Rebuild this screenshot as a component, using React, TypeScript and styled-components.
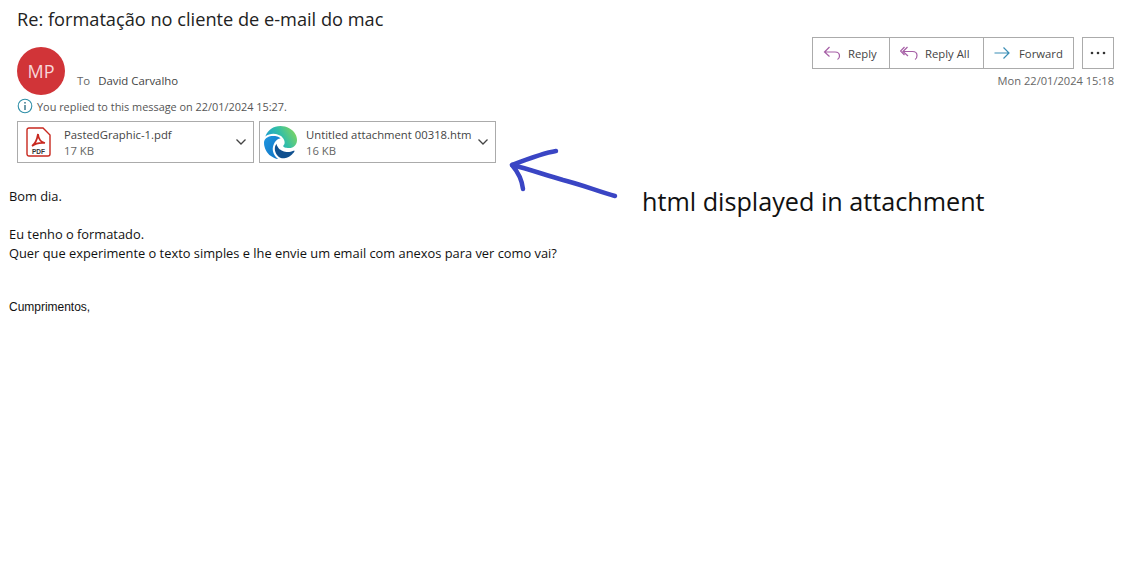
import React from "react";
import styled, { createGlobalStyle } from "styled-components";

const Global = createGlobalStyle`
  html, body { margin: 0; padding: 0; background: #fff; }
  body { font-family: "Open Sans", "Noto Sans", sans-serif; color: #222; }
`;

const Page = styled.div`
  position: relative;
  width: 1130px;
  height: 567px;
  overflow: hidden;
  background: #fff;
`;

const Header = styled.header`
  padding: 8px 16px 0 17px;
`;

const Subject = styled.h1`
  margin: 0;
  height: 26px;
  font-size: 18.2px;
  line-height: 23px;
  font-weight: 400;
  color: #222;
`;

const MetaRow = styled.div`
  display: flex;
  justify-content: space-between;
  height: 48px;
  margin-top: 13px;
`;

const Sender = styled.div`
  display: flex;
  align-items: flex-start;
`;

const Avatar = styled.div`
  width: 48px;
  height: 48px;
  border-radius: 50%;
  background: #d13438;
  color: #f7d7d8;
  font-size: 18px;
  display: flex;
  align-items: center;
  justify-content: center;
`;

const ToLine = styled.div`
  display: flex;
  gap: 8px;
  margin: 26px 0 0 12px;
  font-size: 11.4px;
  line-height: 15px;
`;

const ToLabel = styled.span`
  color: #666;
`;

const ToName = styled.span`
  color: #444;
`;

const Actions = styled.div`
  display: flex;
  flex-direction: column;
  align-items: flex-end;
`;

const ButtonRow = styled.div`
  display: flex;
  gap: 8px;
  margin-top: -10px;
`;

const ButtonGroup = styled.div`
  display: flex;
  height: 30px;
  border: 1px solid #ababab;
`;

const ActionButton = styled.div<{ $w: number; $gap: number }>`
  width: ${(p) => p.$w}px;
  box-sizing: border-box;
  display: flex;
  align-items: center;
  gap: ${(p) => p.$gap}px;
  padding-left: 10px;
  font-size: 11.3px;
  color: #444;
  & + & { border-left: 1px solid #ababab; }
`;

const MoreButton = styled.div`
  width: 30px;
  height: 30px;
  border: 1px solid #ababab;
  display: flex;
  align-items: center;
  justify-content: center;
`;

const Timestamp = styled.div`
  font-size: 11.1px;
  line-height: 15px;
  color: #666;
  margin-top: 4px;
`;

const Notice = styled.div`
  display: flex;
  align-items: center;
  gap: 4px;
  height: 16px;
  margin-top: 3px;
  font-size: 10.9px;
  color: #555;
`;

const Attachments = styled.div`
  display: flex;
  gap: 5px;
  margin-top: 7px;
`;

const Attachment = styled.div`
  width: 237px;
  height: 42px;
  box-sizing: border-box;
  border: 1px solid #ababab;
  display: flex;
  align-items: center;
`;

const IconSlot = styled.div<{ $pad: number }>`
  width: 46px;
  box-sizing: border-box;
  padding-left: ${(p) => p.$pad}px;
  flex: none;
  display: flex;
  align-items: center;
`;

const FileText = styled.div`
  flex: 1;
  min-width: 0;
  padding-top: 2px;
  font-size: 11.3px;
  line-height: 16px;
  color: #444;
  white-space: nowrap;
`;

const FileSize = styled.div`
  color: #666;
`;

const Chevron = styled.div`
  width: 24px;
  flex: none;
  display: flex;
  justify-content: center;
`;

const Body = styled.main`
  padding: 24px 0 0 9px;
  font-size: 12.85px;
  line-height: 19px;
  color: #111;
`;

const Para = styled.p`
  margin: 0 0 19px;
`;

const Line = styled.div``;

const Signature = styled.p`
  margin: 37px 0 0;
  font-family: "Liberation Sans", Arial, sans-serif;
  font-size: 12px;
  line-height: 15px;
  letter-spacing: -0.02px;
  color: #111;
`;

const Annotation = styled.div`
  position: absolute;
  left: 642px;
  top: 184px;
  font-size: 25.2px;
  line-height: 34px;
  color: #111;
`;

const ArrowSvg = styled.svg`
  position: absolute;
  left: 505px;
  top: 140px;
`;

const Purple = "#a55ea5";

const ChevronIcon = () => (
  <svg width="12" height="8" viewBox="0 0 12 8" fill="none" stroke="#444" strokeWidth="1.3">
    <path d="M1.5 1.5 L6 6 L10.5 1.5" />
  </svg>
);

export default function App() {
  return (
    <Page>
      <Global />
      <Header>
        <Subject>Re: formatação no cliente de e-mail do mac</Subject>
        <MetaRow>
          <Sender>
            <Avatar>MP</Avatar>
            <ToLine>
              <ToLabel>To</ToLabel>
              <ToName>David Carvalho</ToName>
            </ToLine>
          </Sender>
          <Actions>
            <ButtonRow>
              <ButtonGroup>
                <ActionButton $w={76} $gap={7}>
                  <svg width="18" height="16" viewBox="0 0 18 16" fill="none" stroke={Purple} strokeWidth="1.2">
                    <path d="M6.5 2 L1.5 7 L6.5 11.5 M1.5 7 H12 C15 7 16.5 9 16.5 11 C16.5 12.5 15.5 14 14.5 14.5" />
                  </svg>
                  Reply
                </ActionButton>
                <ActionButton $w={94} $gap={7}>
                  <svg width="18" height="16" viewBox="0 0 18 16" fill="none" stroke={Purple} strokeWidth="1.2">
                    <path d="M4.5 2 L0.5 6 L4.5 10 M7.5 2 L3 6.5 L8 11 M3 6.5 H12.5 C15.5 6.5 17 8.5 17 10.5 C17 12 16 14 15 14.5" />
                  </svg>
                  Reply All
                </ActionButton>
                <ActionButton $w={90} $gap={9}>
                  <svg width="16" height="14" viewBox="0 0 16 14" fill="none" stroke="#3b8eb5" strokeWidth="1.2">
                    <path d="M0.5 7 H15 M9.5 1.5 L15 7 L9.5 12.5" />
                  </svg>
                  Forward
                </ActionButton>
              </ButtonGroup>
              <MoreButton>
                <svg width="16" height="4" viewBox="0 0 16 4" fill="#333">
                  <circle cx="2" cy="2" r="1.3" />
                  <circle cx="8" cy="2" r="1.3" />
                  <circle cx="14" cy="2" r="1.3" />
                </svg>
              </MoreButton>
            </ButtonRow>
            <Timestamp>Mon 22/01/2024 15:18</Timestamp>
          </Actions>
        </MetaRow>
        <Notice>
          <svg width="16" height="16" viewBox="0 0 16 16" fill="none">
            <circle cx="8" cy="8" r="6.8" stroke="#2f8fa8" strokeWidth="1.1" />
            <rect x="7.3" y="7" width="1.4" height="5" fill="#2f6f85" />
            <rect x="7.3" y="4" width="1.4" height="1.6" fill="#2f6f85" />
          </svg>
          You replied to this message on 22/01/2024 15:27.
        </Notice>
        <Attachments>
          <Attachment>
            <IconSlot $pad={8}>
              <svg width="25" height="30" viewBox="0 0 25 30">
                <path d="M1 3 a2 2 0 0 1 2-2 H17 L24 8 V27 a2 2 0 0 1-2 2 H3 a2 2 0 0 1-2-2 Z" fill="#fff" stroke="#c8281f" strokeWidth="1.4" />
                <path d="M6 19 C9 17 11 13 12 7 C12.5 12 14 15 19 16 C15 15.5 10 16 6 19 Z" fill="none" stroke="#c8281f" strokeWidth="1.7" />
                <text x="12.5" y="27" textAnchor="middle" fontSize="6.5" fontWeight="700" fontFamily="Liberation Sans, sans-serif" fill="#333">PDF</text>
              </svg>
            </IconSlot>
            <FileText>
              <div>PastedGraphic-1.pdf</div>
              <FileSize>17 KB</FileSize>
            </FileText>
            <Chevron>
              <ChevronIcon />
            </Chevron>
          </Attachment>
          <Attachment>
            <IconSlot $pad={4}>
              <svg width="33" height="33" viewBox="0 0 24 24">
                <defs>
                  <linearGradient id="edgeTop" x1="0" y1="0.6" x2="1" y2="0.2">
                    <stop offset="0" stopColor="#1b9ad6" />
                    <stop offset="0.5" stopColor="#33bfa6" />
                    <stop offset="1" stopColor="#86d75a" />
                  </linearGradient>
                  <linearGradient id="edgeLeft" x1="0" y1="0" x2="1" y2="1">
                    <stop offset="0" stopColor="#1f97e0" />
                    <stop offset="1" stopColor="#0f6fc0" />
                  </linearGradient>
                </defs>
                <path
                  fill="#10508f"
                  d="M21.86 17.86q.14 0 .25.12.1.13.1.25t-.11.33l-.32.46-.43.53-.44.5q-.21.25-.38.42l-.22.23q-.58.53-1.34 1.04-.76.51-1.6.91-.86.4-1.74.64t-1.67.24q-.9 0-1.69-.28-.8-.28-1.48-.78-.68-.5-1.22-1.17-.53-.66-.92-1.44-.38-.77-.58-1.6-.2-.83-.2-1.67 0-1 .32-1.96.33-.97.87-1.8.14.95.55 1.77.41.82 1.02 1.5.6.68 1.38 1.21.78.54 1.64.9.86.36 1.77.56.92.2 1.8.2 1.12 0 2.18-.24 1.06-.23 2.06-.72l.2-.1.2-.05z"
                />
                <path
                  fill="url(#edgeLeft)"
                  d="M6.36 16.59q0 1.1.27 2.15.27 1.06.78 2.03.51.96 1.24 1.77.74.82 1.66 1.4-1.47-.2-2.8-.74-1.33-.55-2.48-1.37-1.15-.83-2.08-1.9-.92-1.07-1.58-2.33T.36 14.94Q0 13.54 0 12.06q0-.81.32-1.49.31-.68.83-1.23.53-.55 1.2-.96.66-.4 1.35-.66.74-.27 1.5-.39.78-.12 1.55-.12.7 0 1.42.1.72.12 1.4.35.68.23 1.32.57.63.35 1.16.83-.35 0-.7.07-.33.07-.65.23v-.02q-.63.28-1.2.74-.57.46-1.05 1.04-.48.58-.87 1.26-.38.67-.65 1.39-.27.71-.42 1.44-.15.72-.15 1.38z"
                />
                <path
                  fill="url(#edgeTop)"
                  d="M11.96.06q1.7 0 3.33.39 1.63.38 3.07 1.15 1.43.77 2.62 1.93 1.18 1.16 1.98 2.7.49.94.76 1.96.28 1 .28 2.08 0 .89-.23 1.7-.24.8-.69 1.48-.45.68-1.1 1.22-.64.53-1.45.88-.54.24-1.11.36-.58.13-1.16.13-.42 0-.97-.03-.54-.03-1.1-.12-.55-.1-1.05-.28-.5-.19-.84-.5-.12-.09-.23-.24-.1-.16-.1-.33 0-.15.16-.35.16-.2.35-.5.2-.28.36-.68.16-.4.16-.95 0-1.06-.4-1.96-.4-.91-1.06-1.64-.66-.74-1.52-1.28-.86-.55-1.79-.89-.84-.3-1.72-.44-.87-.14-1.76-.14-1.55 0-3.06.45T.94 7.55q.71-1.74 1.81-3.13Q3.85 3 5.25 2 6.65 1 8.3.53 9.96.06 11.96.06z"
                />
              </svg>
            </IconSlot>
            <FileText>
              <div>Untitled attachment 00318.htm</div>
              <FileSize>16 KB</FileSize>
            </FileText>
            <Chevron>
              <ChevronIcon />
            </Chevron>
          </Attachment>
        </Attachments>
      </Header>
      <Body>
        <Para>Bom dia.</Para>
        <Line>Eu tenho o formatado.</Line>
        <Line>Quer que experimente o texto simples e lhe envie um email com anexos para ver como vai?</Line>
        <Signature>Cumprimentos,</Signature>
      </Body>
      <ArrowSvg width="120" height="60" viewBox="0 0 120 60" fill="none" stroke="#3a45c4" strokeWidth="4.5" strokeLinecap="round" strokeLinejoin="round">
        <path d="M51 11 C38 13 20 20 7 25 C24 29 40 35 58 40 C75 44 95 52 110 56" />
        <path d="M7 25 C13 32 17 40 18 49" />
      </ArrowSvg>
      <Annotation>html displayed in attachment</Annotation>
    </Page>
  );
}
